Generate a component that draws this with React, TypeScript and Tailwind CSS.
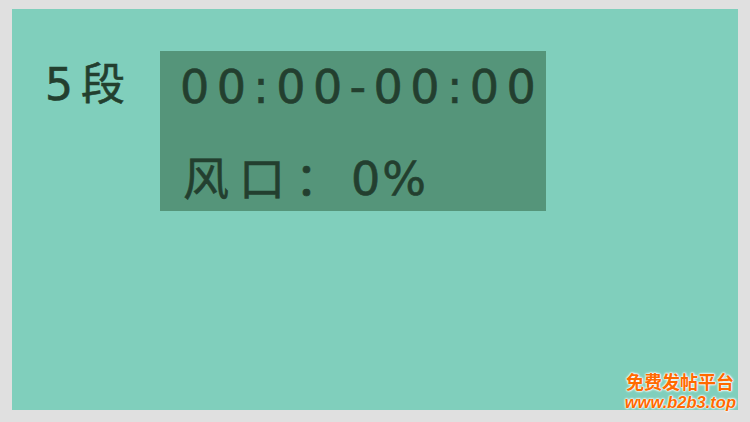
const digitFont = { fontFamily: '"DejaVu Sans", "Noto Sans CJK SC", sans-serif' };

const Watermark = () => (
    <div className="absolute right-[15px] bottom-[12px] flex flex-col items-end leading-none text-[#ff6a00] [text-shadow:0_0_1px_#fff,0_0_2px_#fff,0_0_2px_#fff,0_0_3px_#fff]">
        <span className="mr-[1px] whitespace-nowrap text-[18px] font-bold [font-family:'Noto_Sans_CJK_SC',sans-serif]">免费发帖平台</span>
        <span className="mt-[4px] -mr-[1px] whitespace-nowrap text-[16.5px] font-bold italic [font-family:'Liberation_Sans',sans-serif]">www.b2b3.top</span>
    </div>
);

export default function App() {
    return (
        <div className="relative w-[750px] h-[422px] bg-[#e0e0e0] pl-[12px] pt-[9px] pr-[12px] pb-[12px]">
            <div className="flex h-full w-full bg-[#80cfbc] pt-[42px] text-[#233f2f] [-webkit-text-stroke:0.6px_#233f2f]">
                <div
                    className="w-[148px] shrink-0 whitespace-nowrap pl-[33px] pt-[12px] text-[44px] leading-none"
                    style={digitFont}
                >
                    <span className="tracking-[8px]">5</span>段
                </div>
                <div className="flex h-[160px] w-[386px] shrink-0 flex-col bg-[#55957a] pl-[20px] pt-[13px]">
                    <div className="whitespace-nowrap text-[46px] leading-none tracking-[7.4px]" style={digitFont}>
                        00:00-00:00
                    </div>
                    <div className="mt-[46px] ml-[3px] flex items-baseline whitespace-nowrap text-[46px] leading-none" style={digitFont}>
                        <span className="tracking-[10px]">风口：</span>
                        <span className="tracking-[2px]">0%</span>
                    </div>
                </div>
            </div>
            <Watermark />
        </div>
    );
}
